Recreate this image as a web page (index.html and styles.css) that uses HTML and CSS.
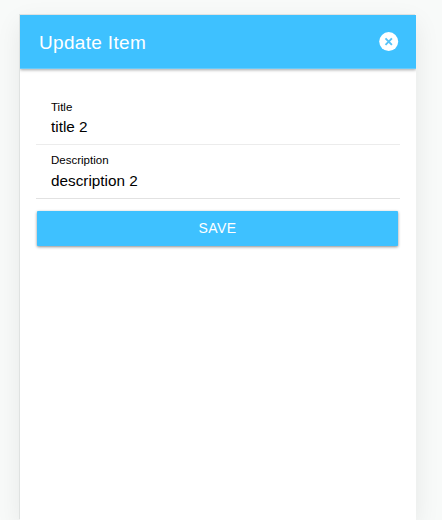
FILE: index.html
```html
<!DOCTYPE html>
<html lang="en">
<head>
<meta charset="utf-8">
<title>Update Item</title>
<link rel="stylesheet" href="styles.css">
</head>
<body>
<main class="device">
  <header class="toolbar">
    <h1 class="title">Update Item</h1>
    <button class="close" aria-label="Close">
      <svg viewBox="0 0 20 20" width="20" height="20"><circle cx="9.7" cy="9.6" r="9.5" fill="#fff"/><path d="M6.5 6.4l6.4 6.4M12.9 6.4l-6.4 6.4" stroke="#55c3f8" stroke-width="1.9"/></svg>
    </button>
  </header>
  <form class="content">
    <div class="item"><span class="label">Title</span><span class="value">title 2</span></div>
    <div class="item item-last"><span class="label">Description</span><span class="value">description 2</span></div>
    <button type="button" class="save">SAVE</button>
  </form>
</main>
</body>
</html>
```
FILE: styles.css
```css
* { box-sizing: border-box; }
body {
  margin: 0;
  height: 520px;
  overflow: hidden;
  padding: 15px 26px 0 20px;
  background: #f8faf9;
  font-family: "Liberation Sans", Arial, sans-serif;
}
.device {
  height: 505px;
  background: #fff;
  box-shadow: -1px -1px 0 #dfe2e1, 0 8px 24px rgba(0, 0, 0, .08);
}
.toolbar {
  height: 54px;
  padding: 1px 17px 0 19px;
  display: flex;
  align-items: center;
  justify-content: space-between;
  background: #3ec1ff;
  border-bottom: 1px solid #69cbfb;
  box-shadow: 0 1px 3px rgba(0, 0, 0, .35);
  clip-path: inset(0 0 -5px 0);
}
.title { margin: 0; padding-top: 2px; font-size: 19px; line-height: 22px; font-weight: 400; color: #fff; letter-spacing: .33px; }
.close { display: flex; padding: 0; border: 0; background: none; }
.content { padding: 22px 16px 0; }
.item {
  height: 54px;
  padding: 10px 15px 0;
  border-bottom: 1px solid #ececec;
}
.item-last { padding-top: 9px; border-color: #e2e2e2; }
.label { display: block; font-size: 11.5px; line-height: 13px; }
.value { display: block; margin-top: 4px; font-size: 15.3px; line-height: 17px; }
.item-last .value { margin-top: 5px; }
.save {
  display: block;
  width: 361px;
  height: 35px;
  margin: 12px 1px 0;
  padding: 0 0 1px;
  border: 0;
  border-radius: 1px;
  background: #3ec1ff;
  color: #fff;
  font: 14px "Liberation Sans", Arial, sans-serif;
  letter-spacing: .45px;
  box-shadow: 0 1px 3px rgba(0, 0, 0, .45);
}
```
